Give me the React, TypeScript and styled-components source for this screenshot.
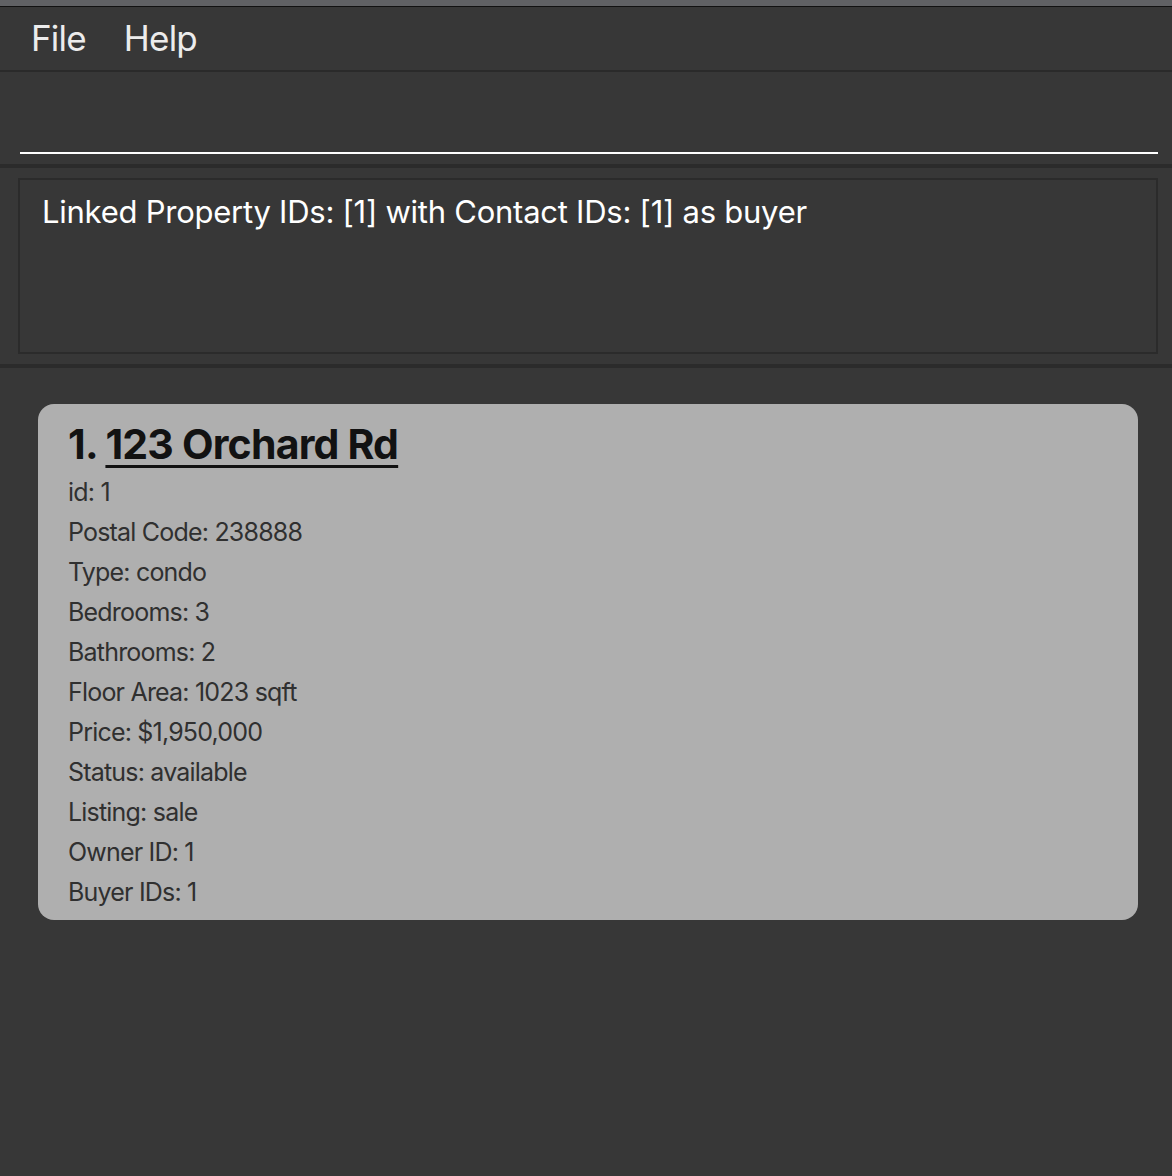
import React from 'react';
import styled, { createGlobalStyle } from 'styled-components';

const GlobalStyle = createGlobalStyle`
  *, *::before, *::after {
    box-sizing: border-box;
  }
  html, body {
    margin: 0;
    padding: 0;
    background: #373737;
  }
  body {
    font-family: Inter, "Noto Sans", "Liberation Sans", sans-serif;
  }
`;

const Window = styled.div`
  width: 100%;
  min-height: 1176px;
  background: #373737;
  display: flex;
  flex-direction: column;
`;

const TitleStrip = styled.div`
  height: 7px;
  background: #606164;
  border-bottom: 1px solid #111111;
`;

const MenuBar = styled.nav`
  height: 65px;
  display: flex;
  align-items: center;
  gap: 38px;
  padding-left: 31px;
  border-bottom: 2px solid #2a2a2a;
`;

const MenuItem = styled.span`
  color: #ececec;
  font-size: 35px;
  letter-spacing: -0.8px;
  line-height: 1;
`;

const CommandArea = styled.div`
  height: 96px;
  padding: 0 14px 10px 20px;
  display: flex;
  align-items: flex-end;
  border-bottom: 4px solid #2b2b2b;
`;

const CommandInput = styled.div`
  flex: 1;
  height: 2px;
  background: #ffffff;
`;

const ResultArea = styled.div`
  height: 200px;
  padding: 10px 14px 10px 18px;
  border-bottom: 4px solid #2b2b2b;
  display: flex;
`;

const ResultBox = styled.div`
  flex: 1;
  border: 2px solid #2b2b2b;
  padding: 13px 22px;
  color: #ffffff;
  font-size: 31px;
  letter-spacing: -0.25px;
  line-height: 1.2;
`;

const ListArea = styled.main`
  flex: 1;
  padding: 36px 34px 0 38px;
`;

const Card = styled.article`
  background: #afafaf;
  border-radius: 16px;
  padding: 14px 30px 8px;
`;

const CardTitle = styled.h2`
  margin: 0 0 2px;
  color: #121212;
  font-size: 41px;
  font-weight: 700;
  letter-spacing: -0.8px;
  line-height: 52px;

  u {
    text-decoration-thickness: 3px;
    text-underline-offset: 6px;
  }
`;

const Field = styled.div`
  color: #303030;
  font-size: 25px;
  letter-spacing: -0.8px;
  line-height: 40px;
`;

const fields = [
  'id: 1',
  'Postal Code: 238888',
  'Type: condo',
  'Bedrooms: 3',
  'Bathrooms: 2',
  'Floor Area: 1023 sqft',
  'Price: $1,950,000',
  'Status: available',
  'Listing: sale',
  'Owner ID: 1',
  'Buyer IDs: 1',
];

export default function App() {
  return (
    <>
      <GlobalStyle />
      <Window>
        <TitleStrip />
        <MenuBar>
          <MenuItem>File</MenuItem>
          <MenuItem>Help</MenuItem>
        </MenuBar>
        <CommandArea>
          <CommandInput />
        </CommandArea>
        <ResultArea>
          <ResultBox>Linked Property IDs: [1] with Contact IDs: [1] as buyer</ResultBox>
        </ResultArea>
        <ListArea>
          <Card>
            <CardTitle>
              1. <u>123 Orchard Rd</u>
            </CardTitle>
            {fields.map((f) => (
              <Field key={f}>{f}</Field>
            ))}
          </Card>
        </ListArea>
      </Window>
    </>
  );
}
